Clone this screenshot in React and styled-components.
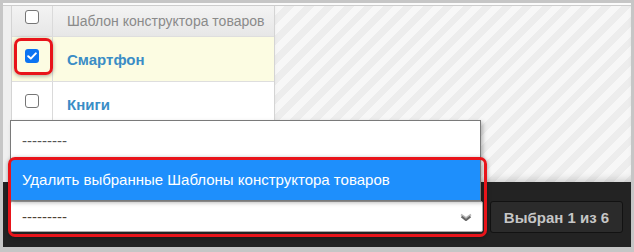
import styled, { createGlobalStyle } from "styled-components";

const GlobalStyle = createGlobalStyle`
  html, body { margin: 0; padding: 0; }
  body {
    width: 634px;
    height: 252px;
    overflow: hidden;
    background: #c6c6c6;
    font-family: "Liberation Sans", Arial, sans-serif;
  }
`;

const Page = styled.div`
  box-sizing: border-box;
  width: 634px;
  height: 252px;
  padding: 3px 3px 5px 3px;
`;

const Panel = styled.div`
  height: 244px;
  display: flex;
  flex-direction: column;
  background: #f0f0f0;
  border-top: 2px solid #fbfbfb;
  box-sizing: border-box;
`;

const Content = styled.div`
  flex: 0 0 177px;
  display: flex;
  border-top: 1px solid #cdcdcd;
  box-sizing: border-box;
  overflow: hidden;
`;

const Gutter = styled.div`
  width: 8px;
  background: #efefef;
`;

const Table = styled.div`
  width: 264px;
  box-sizing: border-box;
  background: #fff;
  border-left: 1px solid #d4d4d4;
  border-right: 1px solid #d4d4d4;
`;

const Stripes = styled.div`
  flex: 1;
  background: repeating-linear-gradient(
    135deg,
    #f7f7f7 0 7px,
    #ededed 7px 14px
  );
  box-shadow: inset 0 -7px 8px -5px rgba(0, 0, 0, 0.18);
`;

const Row = styled.div`
  display: grid;
  grid-template-columns: 41px 1fr;
  height: ${(p) => p.$h}px;
  box-sizing: border-box;
  border-bottom: 1px solid #dedede;
  background: ${(p) =>
    p.$head ? "linear-gradient(#f3f3f3, #e7e7e7)" : p.$on ? "#fcfce2" : "#fff"};
`;

const BoxCell = styled.div`
  position: relative;
  border-right: 1px solid #dadada;
  display: flex;
  justify-content: center;
  padding-top: ${(p) => p.$top}px;
  box-sizing: border-box;
`;

const TextCell = styled.div`
  display: flex;
  align-items: center;
  padding-left: 14px;
  font-size: ${(p) => (p.$head ? 14 : 15)}px;
  color: ${(p) => (p.$head ? "#8a8a8a" : "#3a8dc6")};
  font-weight: ${(p) => (p.$head ? "normal" : "bold")};
  white-space: nowrap;
`;

const Check = styled.span`
  width: 14px;
  height: 14px;
  box-sizing: border-box;
  border-radius: 3px;
  border: ${(p) => (p.$on ? "none" : "1px solid #767676")};
  background: ${(p) => (p.$on ? "#0b74f2" : "#fff")};
  display: flex;
  align-items: center;
  justify-content: center;
`;

const Mark = styled.div`
  position: absolute;
  pointer-events: none;
  border: 3px solid #e8141a;
  border-radius: 7px;
  box-shadow: 0 1px 4px rgba(0, 0, 0, 0.35);
  top: ${(p) => p.$t}px;
  left: ${(p) => p.$l}px;
  right: ${(p) => p.$r}px;
  bottom: ${(p) => p.$b}px;
`;

const ActionBar = styled.div`
  flex: 1;
  background: #232323;
  display: flex;
  align-items: flex-start;
  gap: 7px;
  padding: 19px 0 0 7px;
`;

const SelectWrap = styled.div`
  position: relative;
  width: 473px;
`;

const Select = styled.div`
  height: 31px;
  box-sizing: border-box;
  background: #fff;
  border: 1px solid #a9a9a9;
  border-radius: 2px;
  display: flex;
  align-items: center;
  justify-content: space-between;
  padding: 0 10px 0 11px;
  font-size: 15px;
  color: #4f4234;
`;

const Popup = styled.div`
  position: absolute;
  left: 0;
  bottom: 100%;
  width: 471px;
  height: 81px;
  box-sizing: border-box;
  border: 1px solid #7a7a7a;
  border-bottom: none;
  background: #fff;
  display: flex;
  flex-direction: column;
  box-shadow: 2px 2px 4px rgba(0, 0, 0, 0.25);
`;

const Option = styled.div`
  flex: ${(p) => (p.$sel ? "0 0 41px" : "1")};
  display: flex;
  align-items: center;
  padding-left: 11px;
  font-size: 15px;
  background: ${(p) => (p.$sel ? "#1e8ffc" : "#fff")};
  color: ${(p) => (p.$sel ? "#fff" : "#555")};
  border-bottom: ${(p) => (p.$sel ? "1px solid #7a7a7a" : "none")};
  white-space: nowrap;
`;

const Button = styled.div`
  width: 133px;
  height: 32px;
  box-sizing: border-box;
  background: #2b2b2b;
  border: 1px solid #121212;
  border-radius: 3px;
  color: #c6c6c6;
  font-size: 15px;
  font-weight: bold;
  display: flex;
  align-items: center;
  justify-content: center;
`;

const rows = [
  { title: "Смартфон", on: true },
  { title: "Книги", on: false },
];

const Tick = () => (
  <svg width="10" height="8" viewBox="0 0 10 8">
    <path d="M1.2 4.2 L3.8 6.6 L8.8 1.4" fill="none" stroke="#fff" strokeWidth="2" strokeLinecap="round" strokeLinejoin="round" />
  </svg>
);

const Chevron = () => (
  <svg width="12" height="8" viewBox="0 0 12 8">
    <path d="M1 1.5 L6 5 L11 1.5" fill="none" stroke="#b8b8b8" strokeWidth="1.8" />
    <path d="M1.5 3.5 L6 7 L10.5 3.5" fill="none" stroke="#666" strokeWidth="2.2" />
  </svg>
);

export default function App() {
  return (
    <Page>
      <GlobalStyle />
      <Panel>
        <Content>
          <Gutter />
          <Table>
            <Row $head $h={31}>
              <BoxCell $top={4}>
                <Check />
              </BoxCell>
              <TextCell $head>Шаблон конструктора товаров</TextCell>
            </Row>
            {rows.map((r) => (
              <Row key={r.title} $on={r.on} $h={45}>
                <BoxCell $top={12}>
                  <Check $on={r.on}>{r.on && <Tick />}</Check>
                  {r.on && <Mark $t={1} $l={2} $r={-1} $b={6} />}
                </BoxCell>
                <TextCell>{r.title}</TextCell>
              </Row>
            ))}
          </Table>
          <Stripes />
        </Content>
        <ActionBar>
          <SelectWrap>
            <Popup>
              <Option>---------</Option>
              <Option $sel>Удалить выбранные Шаблоны конструктора товаров</Option>
            </Popup>
            <Select>
              <span>---------</span>
              <Chevron />
            </Select>
            <Mark $t={-44} $l={-2} $r={-4} $b={-5} />
          </SelectWrap>
          <Button>Выбран 1 из 6</Button>
        </ActionBar>
      </Panel>
    </Page>
  );
}
